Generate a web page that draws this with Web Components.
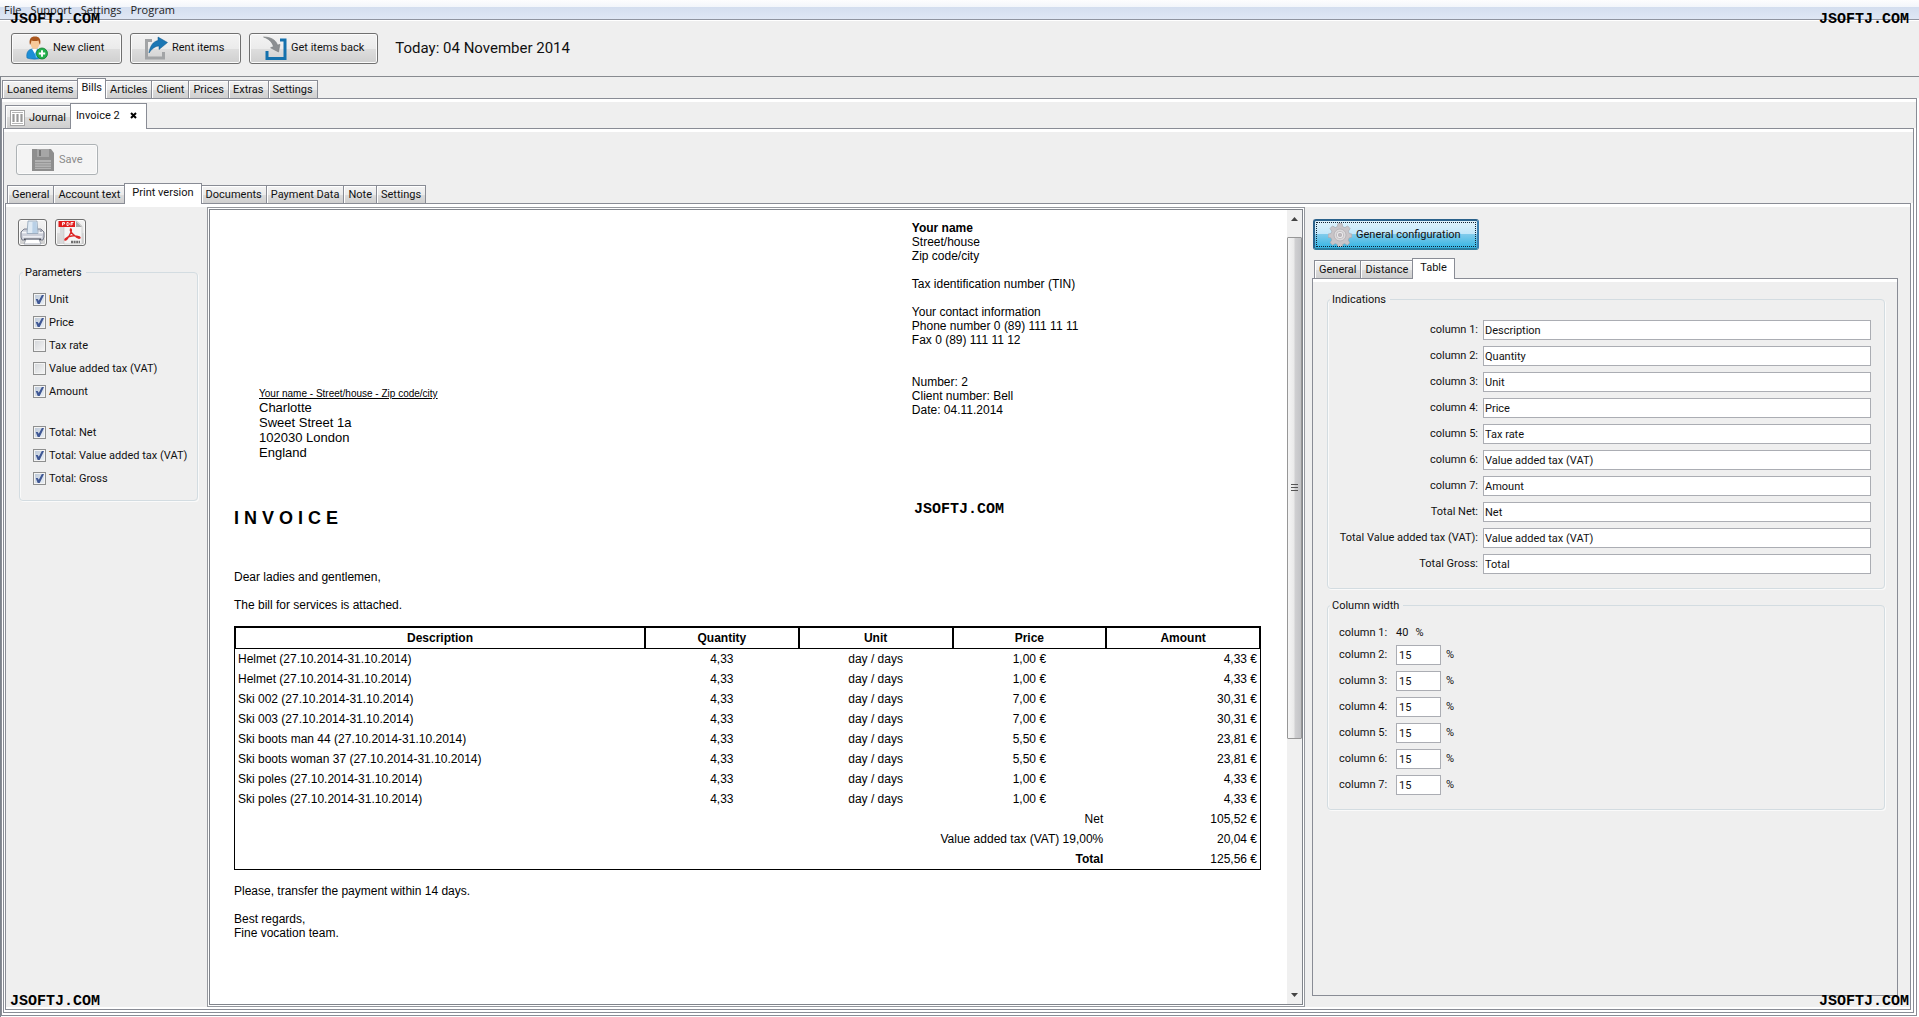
<!DOCTYPE html>
<html lang="en">
<head>
<meta charset="utf-8">
<title>Rental manager</title>
<style>
html, body { margin: 0; height: 100%; }
body { background: #efefef; color: #111; font: 11px/14px Roboto, "Liberation Sans", sans-serif; --line: #898c95; --panel: #efefef; --ink: #111; }
</style>
</head>
<body>
<rental-app></rental-app>
<script>
const define = (name, html, setup) => {
  const template = document.createElement('template');
  template.innerHTML = '<style>*,*::before,*::after{box-sizing:border-box}:host{box-sizing:border-box}button,input{font:inherit;color:inherit;margin:0}</style>' + html;
  customElements.define(name, class extends HTMLElement {
    constructor() {
      super();
      this.attachShadow({ mode: 'open' }).append(template.content.cloneNode(true));
    }
    connectedCallback() { if (setup) setup(this, this.shadowRoot); }
  });
};

/* ---------- icons ---------- */
const ICONS = {
  client: `<svg width="24" height="24" viewBox="0 0 24 24"><path d="M2 22c-1-5 1-9 6-9h3c5 0 6 4 6 9-4 1.500-11 1.500-15 0z" fill="#1d8fd6" stroke="#0f6cae" stroke-width=".6"/><path d="M7 13l3 5 2-5z" fill="#fff"/><path d="M10 18l3-5 1 7-3 2z" fill="#5cc0ef"/><ellipse cx="10" cy="7.500" rx="4.300" ry="5.500" fill="#f8c999"/><path d="M5 9C3.500 3 6 .5 10 .5S16.500 3 15 9c-.8-1-1-3-1.500-4.500C11 5.500 8 5 6.500 4.500 6 6 6 8 5 9z" fill="#a9561d"/><circle cx="17" cy="17.500" r="5.500" fill="#23b14d" stroke="#0f7c2c" stroke-width=".8"/><path d="M17 14.300v6.400M13.800 17.500h6.400" stroke="#fff" stroke-width="1.900"/></svg>`,
  rent: `<svg width="24" height="24" viewBox="0 0 24 24"><path d="M8 4.500H2.500v17.500h17V16" fill="none" stroke="#a2a4a6" stroke-width="3"/><path d="M5 17C6 10 9 5.500 14 4.500V1l9.500 5.500L15 13.500V10c-4 .2-7 2.500-10 7z" fill="#1b77b4" stroke="#0d568b" stroke-width=".5"/></svg>`,
  back: `<svg width="24" height="24" viewBox="0 0 24 24"><path d="M17 4h5v18.500H4V15" fill="none" stroke="#1471ad" stroke-width="3"/><path d="M.5 1C8 1 13 4 14.500 9l2.500-.6-1.500 7.600-8-4.200 3-1.300C9 6 6 3 .5 1z" fill="#8c8f92" stroke="#717477" stroke-width=".5"/></svg>`,
  save: `<svg width="24" height="24" viewBox="0 0 24 24"><path d="M1 1h19l3 4v18H1z" fill="#8e8e8e"/><path d="M6 1h12v8H6z" fill="#a6a6a6"/><path d="M8 2h2v6H8z" fill="#777"/><path d="M4 12h16v9H4z" fill="#b2b2b2"/><path d="M4 14.500h16M4 17h16M4 19.500h16" stroke="#969696"/></svg>`,
  gear: `<svg width="24" height="24" viewBox="0 0 24 24"><g fill="#c9c5c8" stroke="#a8a3a8" stroke-width=".6"><path d="M10 .5h4l.7 3.200 2.200.9 2.800-1.700 2.400 2.700-1.700 2.600.8 2.300 2.700.6v3.200l-2.800.6-.9 2.200 1.600 2.700-2.500 2.500-2.600-1.700-2 .8-.7 3h-4l-.7-3-2.100-.9-2.700 1.700-2.400-2.600 1.700-2.600-.9-2.100-2.800-.6v-3.200l2.900-.6.8-2.300L2 5.500l2.500-2.600 2.700 1.700 2.100-.9z"/><circle cx="12" cy="12" r="6" fill="#dcdadc"/><circle cx="12" cy="12" r="3.700" fill="#f0eff0"/><circle cx="12" cy="12" r="1.800" fill="#bdb9bd"/></g></svg>`,
  journal: `<svg width="15" height="16" viewBox="0 0 15 16"><rect x=".5" y=".5" width="14" height="15" fill="#fff" stroke="#a5a5a5"/><path d="M2 2.500h11M2 13.500h11" stroke="#b5b5b5"/><path d="M3.500 4v8M7.500 4v8M11.500 4v8" stroke="#999" stroke-width="2.200"/></svg>`,
  print: `<svg width="25" height="25" viewBox="0 0 25 25"><path d="M1 17v-5l3-3h17l3 3v5l-1 3H2z" fill="#cdd0da" stroke="#6f7583" stroke-width=".9"/><path d="M2 12.500h21" stroke="#f6f7fa" stroke-width="1.600"/><path d="M8 1h9l1 12.500H7z" fill="#dfeaf4" stroke="#8fa2b6" stroke-width=".8"/><path d="M12.500 2h4l.8 11h-5z" fill="#b9d0e6"/><path d="M3 16h19v1.500H3z" fill="#eceef3"/><path d="M4 18.500h17V20H4z" fill="#4a4e59"/><path d="M6 19.500h13l2 4.500H4z" fill="#fff" stroke="#8a909d" stroke-width=".7"/><circle cx="21" cy="11" r=".8" fill="#6b7282"/></svg>`,
  pdf: `<svg width="27" height="25" viewBox="0 0 27 25"><path d="M3 1h16l6 6v17H3z" fill="#d9d9da"/><path d="M7 1h13l5 5v18H7z" fill="#f4f4f4" stroke="#c0c0c0" stroke-width=".6"/><path d="M19 1l6 6h-6z" fill="#a9a9a9"/><path d="M1.500 1h16.500v6H1.500z" fill="#e01b1b"/><path d="M5.500 5.500v-3h2v1.500h-2M10 2.500v3c3 .3 3-3.300 0-3zM14 5.500v-3h2.500M14 4h2" fill="none" stroke="#fff" stroke-width=".9"/><path d="M13.500 9c2 0 .5 5-3.500 10-1.800 2-2.800 1-1.500-.3 3-3 9-3.700 14-1.700 1.500 1-.5 1.800-2.500.5C16.500 15 12.500 11 13.500 9z" fill="none" stroke="#dc2424" stroke-width="1.400"/><path d="M14 22h9" stroke="#6f6f6f" stroke-width="2.500" stroke-dasharray="2 .6"/></svg>`
};

define('menu-bar', `
<style>
:host { display: block; font: 11px/18px "Open Sans", "Noto Sans", sans-serif; }
nav { display: flex; gap: 9px; height: 20px; padding: 1px 4px 0; border-bottom: 1px solid #8f94a0; box-shadow: 0 1px #fff;
  background: linear-gradient(#fdfdfe 0, #f3f6fb 35%, #d4deef 38%, #dfe7f5 100%); }
a { color: #222; text-decoration: none; }
</style>
<nav><a href="#file">File</a><a href="#support">Support</a><a href="#settings">Settings</a><a href="#program">Program</a></nav>`);

define('icon-button', `
<style>
:host { display: block; }
button { display: flex; align-items: center; gap: 4px; height: 31px; min-width: var(--button-min, 0); padding: 0 13px; color: var(--ink); white-space: nowrap;
  border: 1px solid #707070; border-radius: 3px; box-shadow: inset 0 0 0 1px #fbfbfb;
  background: linear-gradient(#f3f3f3 0, #ebebeb 50%, #dedede 51%, #cfcfcf 100%); }
button:disabled { color: #8a8a8a; border-color: #adb2b5; background: #f4f4f4; padding: 0 14px; }
svg { display: block; flex: none; }
:host([compact]) button { height: 27px; padding: 0 1px; }
:host([primary]) button { border: 2px solid #2c628b; border-color: #2c628b #3c7fb1 #2c7c9e #2c628b; padding: 0 16px 0 13px; outline: 1px dotted #123; outline-offset: -4px;
  background: linear-gradient(#e0f3fc 0, #c2e7fa 48%, #7fcbec 50%, #35b5e3 100%); box-shadow: none; }
</style>
<button type="button"><span id="i"></span><slot></slot></button>`, (host, root) => {
  const button = root.querySelector('button');
  root.getElementById('i').innerHTML = ICONS[host.getAttribute('icon')];
  button.disabled = host.hasAttribute('disabled');
  if (host.hasAttribute('compact')) button.setAttribute('aria-label', host.getAttribute('label'));
});

define('tab-item', `
<style>
:host { display: flex; height: var(--tab-height, 18px); margin-left: -1px; padding: 1px 4px 0; border: 1px solid var(--line); border-bottom: 0;
  box-shadow: inset 1px 1px #fff; background: linear-gradient(#f3f3f3 0, #ebebeb 50%, #dcdcdc 51%, #cfcfcf 100%); align-items: center; }
:host([selected]) { position: relative; z-index: 1; height: calc(var(--tab-height, 18px) + 3px); margin-bottom: -1px; padding: 0 var(--selected-pad, 7px) 2px; background: #fff; }
button { display: flex; align-items: center; gap: 4px; padding: 0; border: 0; background: none; color: var(--ink); white-space: nowrap; }
svg { display: block; }
#close { display: none; margin-left: 10px; padding-right: 4px; }
:host([closable]) #close { display: block; }
</style>
<button type="button" role="tab"><span id="i"></span><slot></slot></button>
<button type="button" id="close" aria-label="Close tab"><svg width="7" height="7" viewBox="0 0 7 7"><path d="M1 1l5 5M6 1L1 6" stroke="#000" stroke-width="2"/></svg></button>`,
(host, root) => {
  const icon = host.getAttribute('icon');
  if (icon) root.getElementById('i').innerHTML = ICONS[icon]; else root.getElementById('i').remove();
  root.querySelector('[role=tab]').setAttribute('aria-selected', host.hasAttribute('selected'));
});

define('tab-view', `
<style>
:host { display: flex; flex-direction: column; flex: 1; min-height: 0; background: #fff; }
#strip { display: flex; align-items: flex-end; flex: none; height: calc(var(--tab-height, 18px) + var(--strip-gap, 3px)); padding-left: var(--strip-start, 3px); background: var(--panel); }
#pane { display: flex; flex-direction: column; flex: 1; min-height: 0; margin: var(--pane-margin, 0 2px 2px 1px); padding-top: 3px; border: 1px solid var(--line); background: #fff; }
</style>
<div id="strip" role="tablist"><slot name="tab"></slot></div>
<div id="pane"><slot></slot></div>`);

define('group-box', `
<style>
:host { display: block; }
fieldset { margin: 0; min-width: 0; padding: var(--group-padding, 14px); border: 1px solid #d3dce1; border-radius: 4px; box-shadow: inset 1px 0 #fafafa, 1px 1px #fafafa; }
legend { margin-left: var(--legend-shift, -11px); padding: 1px 4px 0 2px; line-height: 14px; }
</style>
<fieldset><legend></legend><slot></slot></fieldset>`, (host, root) => {
  root.querySelector('legend').textContent = host.getAttribute('legend');
});

define('check-item', `
<style>
:host { display: flex; align-items: center; height: 23px; }
input { appearance: none; flex: none; width: 13px; height: 13px; border: 1px solid #8e8f8f; background: linear-gradient(135deg, #d2d5d9, #f6f6f6); box-shadow: inset 0 0 0 1px #f4f4f4; }
input:checked { background: linear-gradient(135deg, #bac6d6, #eef3f8); }
input:checked::after { content: ""; display: block; width: 9px; height: 9px; margin: 1px; background: #3f5794; clip-path: polygon(8% 45%, 30% 45%, 42% 65%, 76% 0, 100% 0, 52% 100%, 30% 100%); }
label { padding-left: 3px; white-space: nowrap; }
</style>
<input type="checkbox" id="c"><label for="c"></label>`, (host, root) => {
  root.querySelector('label').textContent = host.getAttribute('label');
  root.querySelector('input').checked = host.hasAttribute('checked');
});

define('text-field', `
<style>
:host { display: flex; align-items: center; gap: 5px; margin-bottom: 6px; }
:host(:last-of-type) { margin-bottom: 0; }
label { flex: none; width: 139px; text-align: right; white-space: nowrap; }
input { flex: 1; min-width: 0; height: 20px; padding: 0 1px; border: 1px solid #abadb3; border-radius: 0; background: #fff; color: var(--ink); }
:host([percent]) label { width: 52px; text-align: left; }
:host([percent]) input { flex: none; width: 45px; padding: 0 2px; }
</style>
<label for="f"></label><input type="text" id="f"><slot></slot>`, (host, root) => {
  root.querySelector('label').textContent = host.getAttribute('label');
  root.querySelector('input').value = host.getAttribute('value');
});

define('water-mark', `
<style>:host { display: block; font: bold 15px/14px "Liberation Mono", monospace; color: #000; pointer-events: none; }</style>
<slot></slot>`);

define('scroll-bar', `
<style>
:host { display: flex; flex-direction: column; flex: none; width: 15px; background: #f0f0f0; }
button { display: grid; place-items: center; flex: none; width: 100%; height: 18px; padding: 0; border: 0; background: #f0f0f0; }
button svg { display: block; }
#track { display: flex; flex-direction: column; flex: 1; margin-top: 9px; }
#thumb { display: grid; place-items: center; flex: 0 0 67%; border: 1px solid #979797; border-radius: 1px; background: linear-gradient(90deg, #f5f5f5 0, #eaeaea 45%, #cfcfd1 55%, #c2c3c6 100%); }
</style>
<button type="button" aria-label="Scroll up"><svg width="7" height="4"><path d="M0 4l3.500-4L7 4z" fill="#444"/></svg></button>
<div id="track"><div id="thumb"><svg width="7" height="8"><path d="M0 .5h7M0 3.500h7M0 6.500h7" stroke="#555"/></svg></div></div>
<button type="button" aria-label="Scroll down"><svg width="7" height="4"><path d="M0 0l3.500 4L7 0z" fill="#444"/></svg></button>`);

const ROWS = [
  ['Helmet (27.10.2014-31.10.2014)', '1,00 €', '4,33 €'],
  ['Helmet (27.10.2014-31.10.2014)', '1,00 €', '4,33 €'],
  ['Ski 002 (27.10.2014-31.10.2014)', '7,00 €', '30,31 €'],
  ['Ski 003 (27.10.2014-31.10.2014)', '7,00 €', '30,31 €'],
  ['Ski boots man 44 (27.10.2014-31.10.2014)', '5,50 €', '23,81 €'],
  ['Ski boots woman 37 (27.10.2014-31.10.2014)', '5,50 €', '23,81 €'],
  ['Ski poles (27.10.2014-31.10.2014)', '1,00 €', '4,33 €'],
  ['Ski poles (27.10.2014-31.10.2014)', '1,00 €', '4,33 €']
].map(([item, price, sum]) => `<tr><td>${item}</td><td>4,33</td><td>day / days</td><td>${price}</td><td>${sum}</td></tr>`).join('');

define('invoice-sheet', `
<style>
:host { display: block; position: relative; flex: 1; min-width: 0; padding: 11px 26px 11px 24px; background: #fff; color: #000; font: 12px/14px "Liberation Sans", Arial, sans-serif; }
p { margin: 0 0 14px; }
header { display: grid; grid-template-columns: 66% 34%; }
address { font-style: normal; }
#to { padding: 166px 0 0 25px; font-size: 13px; line-height: 15px; }
#to u { display: block; font-size: 10px; line-height: 13px; }
#from p:last-child { margin: 28px 0 0; }
h1 { margin: 47px 0 41px; font-size: 18px; line-height: 22px; }
table { width: 100%; table-layout: fixed; border-collapse: separate; border-spacing: 0; border: 1px solid #000; margin-bottom: 14px; }
th { height: 22px; padding: 0; border: 1px solid #000; }
th:first-child { width: 40%; }
td { height: 20px; padding: 0 3px; text-align: center; }
td:first-child { text-align: left; }
td:last-child { text-align: right; }
tfoot td:first-child { text-align: right; }
water-mark { position: absolute; left: 704px; top: 293px; }
</style>
<header>
  <address id="to"><u>Your name - Street/house - Zip code/city</u>Charlotte<br>Sweet Street 1a<br>102030 London<br>England</address>
  <address id="from"><p><b>Your name</b><br>Street/house<br>Zip code/city</p><p>Tax identification number (TIN)</p><p>Your contact information<br>Phone number 0 (89) 111 11 11<br>Fax 0 (89) 111 11 12</p><p>Number: 2<br>Client number: Bell<br>Date: 04.11.2014</p></address>
</header>
<h1>I N V O I C E</h1>
<p>Dear ladies and gentlemen,</p>
<p>The bill for services is attached.</p>
<table>
  <thead><tr><th>Description</th><th>Quantity</th><th>Unit</th><th>Price</th><th>Amount</th></tr></thead>
  <tbody>${ROWS}</tbody>
  <tfoot><tr><td colspan="4">Net</td><td>105,52 €</td></tr><tr><td colspan="4">Value added tax (VAT) 19,00%</td><td>20,04 €</td></tr><tr><td colspan="4"><b>Total</b></td><td>125,56 €</td></tr></tfoot>
</table>
<p>Please, transfer the payment within 14 days.</p>
<p>Best regards,<br>Fine vocation team.</p>
<water-mark>JSOFTJ.COM</water-mark>`);

define('print-preview', `
<style>
:host { display: flex; flex: 1; min-width: 0; padding: 1px; border: 1px solid #95989e; background: #fff; }
div { display: flex; flex: 1; min-width: 0; border: 1px solid #80848b; }
</style>
<div><invoice-sheet></invoice-sheet><scroll-bar></scroll-bar></div>`);

define('print-options', `
<style>
:host { display: block; flex: none; width: 201px; padding: 12px 9px 0 12px; background: var(--panel); }
#actions { display: flex; gap: 8px; margin-bottom: 19px; }
group-box { --group-padding: 8px 12px 10px 13px; --legend-shift: -10px; margin-left: 1px; }
#totals { margin-top: 18px; }
</style>
<div id="actions"><icon-button compact icon="print" label="Print"></icon-button><icon-button compact icon="pdf" label="Export as PDF"></icon-button></div>
<group-box legend="Parameters">
  <check-item checked label="Unit"></check-item>
  <check-item checked label="Price"></check-item>
  <check-item label="Tax rate"></check-item>
  <check-item label="Value added tax (VAT)"></check-item>
  <check-item checked label="Amount"></check-item>
  <div id="totals">
    <check-item checked label="Total: Net"></check-item>
    <check-item checked label="Total: Value added tax (VAT)"></check-item>
    <check-item checked label="Total: Gross"></check-item>
  </div>
</group-box>`);

define('layout-options', `
<style>
:host { display: flex; flex-direction: column; align-items: stretch; flex: none; width: 605px; padding: 12px 12px 11px 7px; background: var(--panel); }
icon-button { align-self: flex-start; margin: 0 0 7px 1px; }
tab-view { --pane-margin: 0; --tab-height: 18px; --strip-start: 3px; --selected-pad: 7px; }
#body { flex: 1; padding: 10px 12px 0 14px; background: var(--panel); }
group-box { --group-padding: 13px 13px 14px 11px; --legend-shift: -9px; margin-bottom: 9px; }
#fixed { display: flex; margin-bottom: 5px; }
#fixed dt { width: 57px; }
#fixed dd { margin: 0 7px 0 0; }
dl { margin: 0; }
</style>
<icon-button primary icon="gear">General configuration</icon-button>
<tab-view>
  <tab-item slot="tab">General</tab-item><tab-item slot="tab">Distance</tab-item><tab-item slot="tab" selected>Table</tab-item>
  <div id="body">
    <group-box legend="Indications">
      <text-field label="column 1:" value="Description"></text-field>
      <text-field label="column 2:" value="Quantity"></text-field>
      <text-field label="column 3:" value="Unit"></text-field>
      <text-field label="column 4:" value="Price"></text-field>
      <text-field label="column 5:" value="Tax rate"></text-field>
      <text-field label="column 6:" value="Value added tax (VAT)"></text-field>
      <text-field label="column 7:" value="Amount"></text-field>
      <text-field label="Total Net:" value="Net"></text-field>
      <text-field label="Total Value added tax (VAT):" value="Value added tax (VAT)"></text-field>
      <text-field label="Total Gross:" value="Total"></text-field>
    </group-box>
    <group-box legend="Column width">
      <dl id="fixed"><dt>column 1:</dt><dd>40</dd><dd>%</dd></dl>
      <text-field percent label="column 2:" value="15">%</text-field>
      <text-field percent label="column 3:" value="15">%</text-field>
      <text-field percent label="column 4:" value="15">%</text-field>
      <text-field percent label="column 5:" value="15">%</text-field>
      <text-field percent label="column 6:" value="15">%</text-field>
      <text-field percent label="column 7:" value="15">%</text-field>
    </group-box>
  </div>
</tab-view>`);

define('rental-app', `
<style>
:host { display: flex; flex-direction: column; position: relative; min-height: 100vh; }
#toolbar { display: flex; align-items: center; gap: 8px; height: 56px; padding-left: 11px; --button-min: 111px; }
#today { margin-left: 9px; font-size: 15px; line-height: 20px; }
main { display: flex; flex-direction: column; flex: 1; border-top: 1px solid #888b90; border-left: 1px solid #7d838c; background: #fff; }
#main { --pane-margin: 0 2px 1px 0; --strip-start: 2px; --selected-pad: 3px; }
#bills { --pane-margin: 0 2px 2px 1px; --tab-height: 23px; --strip-start: 4px; --selected-pad: 5px; }
#bill { --pane-margin: 0 2px 2px 1px; --tab-height: 18px; --strip-start: 4px; --selected-pad: 7px; }
#save { padding: 12px 0 7px 12px; background: var(--panel); }
#save icon-button { width: fit-content; }
#columns { display: flex; flex: 1; margin-bottom: 2px; }
.mark { position: absolute; }
.top { top: 13px; }
.bottom { bottom: 8px; }
.left { left: 10px; }
.right { right: 10px; }
</style>
<menu-bar></menu-bar>
<div id="toolbar">
  <icon-button icon="client">New client</icon-button>
  <icon-button icon="rent">Rent items</icon-button>
  <icon-button icon="back">Get items back</icon-button>
  <span id="today">Today: 04 November 2014</span>
</div>
<main>
<tab-view id="main">
  <tab-item slot="tab">Loaned items</tab-item><tab-item slot="tab" selected>Bills</tab-item><tab-item slot="tab">Articles</tab-item><tab-item slot="tab">Client</tab-item><tab-item slot="tab">Prices</tab-item><tab-item slot="tab">Extras</tab-item><tab-item slot="tab">Settings</tab-item>
  <tab-view id="bills">
    <tab-item slot="tab" icon="journal">Journal</tab-item><tab-item slot="tab" selected closable>Invoice 2</tab-item>
    <div id="save"><icon-button disabled icon="save">Save</icon-button></div>
    <tab-view id="bill">
      <tab-item slot="tab">General</tab-item><tab-item slot="tab">Account text</tab-item><tab-item slot="tab" selected>Print version</tab-item><tab-item slot="tab">Documents</tab-item><tab-item slot="tab">Payment Data</tab-item><tab-item slot="tab">Note</tab-item><tab-item slot="tab">Settings</tab-item>
      <div id="columns"><print-options></print-options><print-preview></print-preview><layout-options></layout-options></div>
    </tab-view>
  </tab-view>
</tab-view>
</main>
<water-mark class="mark top left">JSOFTJ.COM</water-mark>
<water-mark class="mark top right">JSOFTJ.COM</water-mark>
<water-mark class="mark bottom left">JSOFTJ.COM</water-mark>
<water-mark class="mark bottom right">JSOFTJ.COM</water-mark>`);
</script>
</body>
</html>
